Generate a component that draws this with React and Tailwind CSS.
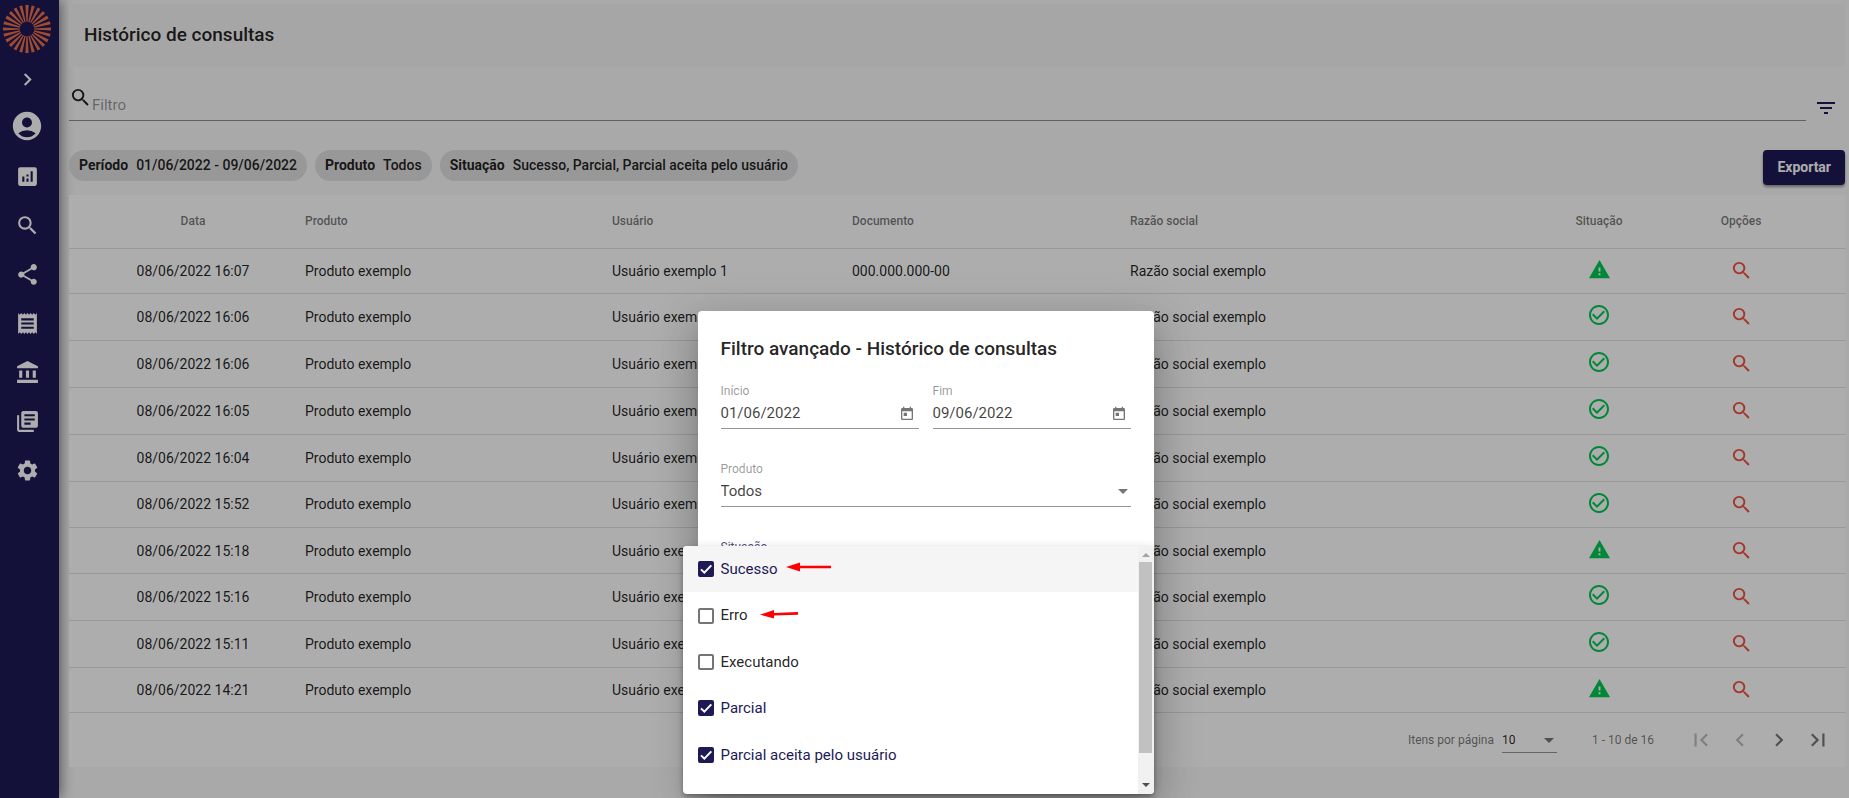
import {
  MdChevronRight, MdChevronLeft, MdAccountCircle, MdAnalytics, MdSearch, MdShare, MdReceipt,
  MdAccountBalance, MdLibraryBooks, MdSettings, MdFilterList, MdWarning, MdCheckCircleOutline,
  MdToday, MdArrowDropDown, MdFirstPage, MdLastPage,
} from "react-icons/md";

const NAV = [
  [MdAnalytics, "Painel"],
  [MdSearch, "Consultas"],
  [MdShare, "Compartilhar"],
  [MdReceipt, "Relatórios"],
  [MdAccountBalance, "Instituições"],
  [MdLibraryBooks, "Biblioteca"],
  [MdSettings, "Configurações"],
];

const ROWS = [
  ["08/06/2022 16:07", true],
  ["08/06/2022 16:06", false],
  ["08/06/2022 16:06", false],
  ["08/06/2022 16:05", false],
  ["08/06/2022 16:04", false],
  ["08/06/2022 15:52", false],
  ["08/06/2022 15:18", true],
  ["08/06/2022 15:16", false],
  ["08/06/2022 15:11", false],
  ["08/06/2022 14:21", true],
];

const CHIPS = [
  ["Período", "01/06/2022 - 09/06/2022"],
  ["Produto", "Todos"],
  ["Situação", "Sucesso, Parcial, Parcial aceita pelo usuário"],
];

const OPTIONS = [
  ["Sucesso", true],
  ["Erro", false],
  ["Executando", false],
  ["Parcial", true],
  ["Parcial aceita pelo usuário", true],
];

function Logo() {
  const rays = Array.from({ length: 24 }, (_, i) => i * 15);
  return (
    <svg viewBox="-24 -24 48 48" className="size-12" aria-hidden="true">
      {rays.map((a) => (
        <polygon key={a} points="-0.6,-7.2 0.6,-7.2 1.6,-24 -1.6,-24" fill="#ee7048" transform={`rotate(${a})`} />
      ))}
    </svg>
  );
}

function Sidebar() {
  return (
    <nav className="flex w-[59px] shrink-0 flex-col items-center bg-[#1d1a56] pt-[5px] pr-[5px] text-white shadow-[2px_0_12px_rgba(0,0,0,0.5)]">
      <Logo />
      <button type="button" aria-label="Expandir" className="mt-[14px]"><MdChevronRight className="size-[25px]" /></button>
      <button type="button" aria-label="Conta" className="mt-[17px]"><MdAccountCircle className="size-[34px]" /></button>
      <div className="mt-[21px] flex flex-col gap-6">
        {NAV.map(([Icon, label]) => (
          <a key={label} href="#" aria-label={label}><Icon className="size-[25px]" /></a>
        ))}
      </div>
    </nav>
  );
}

function ResultsTable() {
  return (
    <table className="h-[518px] w-full table-fixed border-collapse text-left text-sm">
      <colgroup>
        <col className="w-[236px]" />
        <col className="w-[307px]" />
        <col className="w-[240px]" />
        <col className="w-[278px]" />
        <col className="w-[397px]" />
        <col className="w-[144px]" />
        <col className="w-[174px]" />
      </colgroup>
      <thead>
        <tr className="h-[53px] border-b border-black/12 text-xs text-black/54">
          <th className="pl-3 text-center font-medium">Data</th>
          <th className="font-medium">Produto</th>
          <th className="font-medium">Usuário</th>
          <th className="font-medium">Documento</th>
          <th className="font-medium">Razão social</th>
          <th className="text-center font-medium">Situação</th>
          <th className="pr-[34px] text-center font-medium">Opções</th>
        </tr>
      </thead>
      <tbody>
        {ROWS.map(([date, warn], i) => (
          <tr key={i} className="border-b border-black/12">
            <td className="pl-3 text-center">{date}</td>
            <td>Produto exemplo</td>
            <td>Usuário exemplo {i + 1}</td>
            <td>000.000.000-00</td>
            <td>Razão social exemplo</td>
            <td className="pb-[3px] text-[#00c853]">
              {warn ? <MdWarning className="mx-auto size-[23px]" /> : <MdCheckCircleOutline className="mx-auto size-6" />}
            </td>
            <td className="pr-[34px] text-center text-[#f0513f]">
              <button type="button" aria-label="Ver detalhes" className="align-middle"><MdSearch className="size-[23px]" /></button>
            </td>
          </tr>
        ))}
      </tbody>
    </table>
  );
}

function Paginator() {
  return (
    <div className="flex h-[54px] items-center justify-end pr-[10px] text-xs text-black/54">
      <label htmlFor="page-size">Itens por página</label>
      <div className="relative ml-2 flex w-[55px] items-center border-b border-black/42">
        <select id="page-size" className="h-6 w-full appearance-none bg-transparent text-black/87">
          <option>10</option>
        </select>
        <MdArrowDropDown className="pointer-events-none absolute -right-1 size-6" />
      </div>
      <span className="ml-[35px] w-[60px] whitespace-nowrap">1 - 10 de 16</span>
      <div className="ml-8 flex gap-[5px]">
        <button type="button" aria-label="Primeira página" disabled className="p-1 text-black/26"><MdFirstPage className="size-[26px]" /></button>
        <button type="button" aria-label="Página anterior" disabled className="p-1 text-black/26"><MdChevronLeft className="size-[26px]" /></button>
        <button type="button" aria-label="Próxima página" className="p-1"><MdChevronRight className="size-[26px]" /></button>
        <button type="button" aria-label="Última página" className="p-1"><MdLastPage className="size-[26px]" /></button>
      </div>
    </div>
  );
}

function DateField({ id, label, value }) {
  return (
    <div className="flex-1">
      <label htmlFor={id} className="block text-xs leading-4 text-black/42">{label}</label>
      <div className="flex h-[30px] items-center border-b border-black/42 pb-[2px]">
        <input id={id} defaultValue={value} className="w-full min-w-0 bg-transparent text-[15px] leading-6 text-black/75 outline-none" />
        <button type="button" aria-label={`Abrir calendário ${label}`} className="mt-[2px] mr-1 text-black/54"><MdToday className="size-4" /></button>
      </div>
    </div>
  );
}

function Arrow({ slanted }) {
  return slanted ? (
    <svg viewBox="0 0 40 12" className="mb-1 ml-3 h-3 w-10" aria-hidden="true">
      <path d="M0 6.6 14 2v3l24-.9v2.6L14 7.4v3.2z" fill="#fe0000" />
    </svg>
  ) : (
    <svg viewBox="0 0 46 12" className="mb-1 ml-2 h-3 w-[46px]" aria-hidden="true">
      <path d="M0 6 14 1.600v3.100h31v2.600H14v3.100z" fill="#fe0000" />
    </svg>
  );
}

function Option({ label, checked, active }) {
  return (
    <label className={`flex flex-1 items-center pl-[15px] text-[15px] ${active ? "bg-[#f5f5f5]" : ""} ${checked ? "text-[#1d1a56]" : "text-black/87"}`}>
      <span className="relative mr-[7px] size-4">
        <input
          type="checkbox"
          defaultChecked={checked}
          className="block size-4 appearance-none rounded-xs border-2 border-black/54 checked:border-[#1d1a56] checked:bg-[#1d1a56]"
        />
        {checked && (
          <svg viewBox="0 0 24 24" className="pointer-events-none absolute inset-0 size-4" fill="none" stroke="#fff" strokeWidth="3" aria-hidden="true">
            <path d="M4.500 12.500 9.500 17.500 20 6.500" />
          </svg>
        )}
      </span>
      {label}
      {label === "Sucesso" && <Arrow />}
      {label === "Erro" && <Arrow slanted />}
    </label>
  );
}

function StatusPanel() {
  return (
    <div className="absolute top-[235px] right-0 -left-[15px] flex h-[248px] overflow-hidden rounded-[4px] bg-white shadow-[0_2px_4px_-1px_rgba(0,0,0,0.2),0_4px_5px_rgba(0,0,0,0.14),0_1px_10px_rgba(0,0,0,0.12)]">
      <div className="flex h-[232px] flex-1 flex-col">
        {OPTIONS.map(([label, checked], i) => (
          <Option key={label} label={label} checked={checked} active={i === 0} />
        ))}
      </div>
      <div className="flex w-4 flex-col items-center justify-between bg-[#f1f1f1] py-[7px]">
        <svg viewBox="0 0 8 4" className="h-1 w-2" aria-hidden="true"><path d="M0 4 4 0l4 4z" fill="#a3a3a3" /></svg>
        <span className="mt-[5px] mb-auto h-[191px] w-[13px] bg-[#c1c1c1]" />
        <svg viewBox="0 0 8 4" className="h-1 w-2" aria-hidden="true"><path d="M0 0h8L4 4z" fill="#505050" /></svg>
      </div>
    </div>
  );
}

function FilterDialog() {
  return (
    <div role="dialog" aria-labelledby="dialog-title" className="absolute top-[311px] left-1/2 -ml-[227px] h-[476px] w-[456px] rounded-[4px] bg-white px-[23px] pt-[22px] shadow-[0_11px_15px_-7px_rgba(0,0,0,0.2),0_24px_38px_3px_rgba(0,0,0,0.14),0_9px_46px_8px_rgba(0,0,0,0.12)]">
      <h2 id="dialog-title" className="text-[19px] leading-8 font-medium text-black/87">Filtro avançado - Histórico de consultas</h2>
      <div className="mt-[18px] flex gap-[14px]">
        <DateField id="start" label="Início" value="01/06/2022" />
        <DateField id="end" label="Fim" value="09/06/2022" />
      </div>
      <div className="mt-8">
        <label htmlFor="product" className="block text-xs leading-4 text-black/42">Produto</label>
        <div className="relative flex h-[30px] items-center border-b border-black/42 pb-[2px]">
          <select id="product" className="w-full appearance-none bg-transparent text-[15px] leading-6 text-black/75 outline-none">
            <option>Todos</option>
          </select>
          <MdArrowDropDown className="pointer-events-none absolute -right-1 size-6 text-black/54" />
        </div>
      </div>
      <div className="mt-8 text-xs leading-4 text-[#1d1a56]/80">Situação</div>
      <StatusPanel />
    </div>
  );
}

export default function App() {
  return (
    <div className="relative flex min-h-screen overflow-hidden bg-[#fafafa] font-[Roboto,sans-serif] text-black/87">
      <Sidebar />
      <main className="flex min-w-0 flex-1 flex-col pt-1 pr-1 pl-[10px]">
        <header className="flex h-[63px] items-center bg-[#f5f5f5] pl-[15px]">
          <h1 className="text-[19px] font-medium">Histórico de consultas</h1>
        </header>
        <div className="mt-[19px] flex h-[35px]">
          <div className="flex flex-1 border-b border-black/42">
            <MdSearch className="size-[23px]" />
            <input aria-label="Filtro" placeholder="Filtro" className="mt-[7px] h-6 flex-1 bg-transparent text-[15px] outline-none placeholder:text-black/42" />
          </div>
          <button type="button" aria-label="Filtro avançado" className="mt-2 mr-[7px] ml-2 self-center text-[#1d1a56]"><MdFilterList className="size-6" /></button>
        </div>
        <div className="mt-[29px] flex h-[45px] items-start gap-2 text-sm">
          {CHIPS.map(([k, v]) => (
            <div key={k} className="flex h-[31px] items-center gap-2 rounded-full bg-[#e0e0e0] px-[10px] pb-[2px] font-medium">
              <b className="font-bold">{k}</b>
              <span>{v}</span>
            </div>
          ))}
          <button type="button" className="ml-auto h-[35px] rounded-[4px] bg-[#1d1a56] px-[14px] pb-[2px] font-bold text-white shadow-[0_2px_3px_rgba(0,0,0,0.4)]">Exportar</button>
        </div>
        <section className="bg-white">
          <ResultsTable />
          <Paginator />
        </section>
      </main>
      <div className="absolute inset-0 bg-black/32" />
      <FilterDialog />
    </div>
  );
}
